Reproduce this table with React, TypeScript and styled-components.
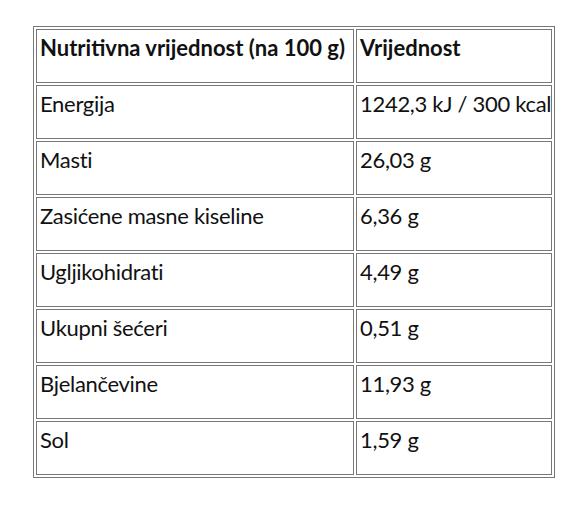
import React from "react";
import styled, { createGlobalStyle } from "styled-components";

const Global = createGlobalStyle`
  html, body { margin: 0; padding: 0; background: #ffffff; }
  body { font-family: Lato, "Open Sans", sans-serif; color: #111; }
`;

const Page = styled.div`
  padding: 26px 0 0 33px;
`;

const Table = styled.table`
  width: 522px;
  table-layout: fixed;
  border: 1px solid #777777;
  border-spacing: 2px;
  border-collapse: separate;
`;

const Col = styled.col<{ $w: number }>`
  width: ${(p) => p.$w}px;
`;

const Cell = styled.td<{ $head?: boolean }>`
  box-sizing: border-box;
  border: 1px solid #777777;
  vertical-align: top;
  padding: 5px 0 0 3px;
  height: 54px;
  font-size: 22px;
  line-height: 26px;
  font-weight: ${(p) => (p.$head ? 700 : 400)};
  letter-spacing: ${(p) => (p.$head ? "0" : "-0.3px")};
  white-space: nowrap;
  overflow: visible;
`;

const rows: [string, string][] = [
  ["Energija", "1242,3 kJ / 300 kcal"],
  ["Masti", "26,03 g"],
  ["Zasićene masne kiseline", "6,36 g"],
  ["Ugljikohidrati", "4,49 g"],
  ["Ukupni šećeri", "0,51 g"],
  ["Bjelančevine", "11,93 g"],
  ["Sol", "1,59 g"],
];

export default function App() {
  return (
    <Page>
      <Global />
      <Table>
        <colgroup>
          <Col $w={318} />
          <Col $w={196} />
        </colgroup>
        <tbody>
          <tr>
            <Cell $head>Nutritivna vrijednost (na 100 g)</Cell>
            <Cell $head>Vrijednost</Cell>
          </tr>
          {rows.map(([k, v]) => (
            <tr key={k}>
              <Cell>{k}</Cell>
              <Cell>{v}</Cell>
            </tr>
          ))}
        </tbody>
      </Table>
    </Page>
  );
}
